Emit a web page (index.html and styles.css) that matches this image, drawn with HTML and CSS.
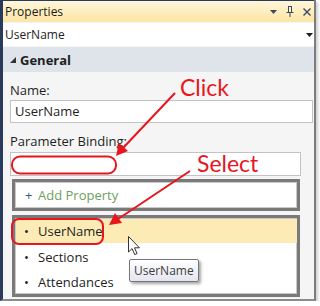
FILE: index.html
```html
<!DOCTYPE html>
<html lang="en">
<head>
    <meta charset="UTF-8">
    <title>Properties</title>
    <link rel="stylesheet" href="styles.css">
</head>
<body>

<div class="frame">
    <div class="titlebar">
        <span class="title">Properties</span>
        <span class="tools">
            <svg width="7" height="4" viewBox="0 0 7 4"><path d="M0 0h7L3.5 4z" fill="#3b4a64"/></svg>
            <svg width="8" height="11" viewBox="0 0 8 11"><path d="M2 .5h4M2.5 .5v6M5.5 .5v6M.5 6.5h7M4 6.5V11" stroke="#3b4a64" fill="none"/></svg>
            <svg width="8" height="8" viewBox="0 0 8 8"><path d="M.5 .5l7 7M7.5 .5l-7 7" stroke="#3b4a64" stroke-width="1.4"/></svg>
        </span>
    </div>

    <div class="combo">
        <span>UserName</span>
        <svg width="7" height="4" viewBox="0 0 7 4"><path d="M0 0h7L3.5 4z" fill="#1e1e1e"/></svg>
    </div>

    <div class="section-head">
        <svg width="6" height="6" viewBox="0 0 6 6"><path d="M6 0v6H0z" fill="#333"/></svg>
        <span>General</span>
    </div>

    <div class="content">
        <div class="label">Name:</div>
        <div class="textbox">UserName</div>

        <div class="label">Parameter Binding:</div>
        <div class="textbox short"></div>

        <div class="popup add-box">
            <span class="plus">+</span>
            <span class="add-text">Add Property</span>
        </div>

        <div class="popup list-box">
            <div class="item selected"><span class="dot">&bull;</span>UserName</div>
            <div class="item"><span class="dot">&bull;</span>Sections</div>
            <div class="item"><span class="dot">&bull;</span>Attendances</div>
        </div>
    </div>

    <div class="tooltip">UserName</div>

    <svg class="cursor" width="13" height="20" viewBox="0 0 13 20">
        <path d="M.5 .5v15.5l3.6-3.4 2.6 6 2.4-1-2.6-5.8h5z" fill="#fff" stroke="#333" stroke-linejoin="round"/>
    </svg>

    <span class="note note-click">Click</span>
    <span class="note note-select">Select</span>

    <svg class="marks" width="320" height="306" viewBox="0 0 320 306">
        <rect x="12" y="156.5" width="104" height="17" rx="8" fill="none" stroke="#e8151f" stroke-width="2"/>
        <rect x="12" y="219" width="91" height="25" rx="7" fill="none" stroke="#e8151f" stroke-width="2"/>
        <path d="M175 93L123 148" stroke="#e8151f" stroke-width="2"/>
        <path d="M116 156l3-13 9 8z" fill="#e8151f"/>
        <path d="M190 171L118 219" stroke="#e8151f" stroke-width="2"/>
        <path d="M109 225l6-12 7 10z" fill="#e8151f"/>
    </svg>
</div>

</body>
</html>
```

FILE: styles.css
```css
body {
    margin: 0;
    background-color: #ffffff;
    font-family: "Open Sans", "Liberation Sans", sans-serif;
}
.frame {
    position: relative;
    width: 311px;
    height: 299px;
    border-left: 3px solid #293a5c;
    border-right: 2px solid #7d7d7d;
    border-bottom: 2px solid #8c8c8c;
    background-color: #f5f5f5;
    overflow: hidden;
    box-shadow: 2px 2px 3px rgba(0, 0, 0, 0.2);
}
.titlebar {
    display: flex;
    align-items: center;
    justify-content: space-between;
    height: 22px;
    padding: 0 2px 0 2px;
    background: linear-gradient(#fff6da, #fde6a4);
    border-top: 1px solid #293a5c;
    box-sizing: border-box;
    font-size: 12px;
    color: #1b1b1b;
}
.tools {
    display: flex;
    align-items: center;
    gap: 9px;
    padding-right: 1px;
}
.combo {
    display: flex;
    align-items: center;
    justify-content: space-between;
    height: 23px;
    padding: 0 1px 0 2px;
    margin-top: 1px;
    background-color: #ffffff;
    box-sizing: border-box;
    font-size: 12px;
    color: #1e1e1e;
}
.section-head {
    display: flex;
    align-items: center;
    gap: 4px;
    height: 25px;
    margin-top: 1px;
    padding-left: 7px;
    background-color: #dfe3ea;
    font-size: 13px;
    font-weight: bold;
    color: #1e1e1e;
}
.content {
    padding: 9px 1px 0 7px;
}
.label {
    height: 18px;
    line-height: 18px;
    font-size: 13px;
    color: #1e1e1e;
}
.textbox {
    height: 23px;
    margin: 1px 0 9px 0;
    padding-left: 4px;
    line-height: 21px;
    background-color: #ffffff;
    border: 1px solid #c3c3c3;
    box-sizing: border-box;
    font-size: 13px;
    color: #1e1e1e;
}
.textbox.short {
    width: 291px;
    height: 24px;
    margin: 2px 0 0 0;
}
.popup {
    width: 288px;
    margin-left: 2px;
    background-color: #ffffff;
    border: 3px solid #7a7a7a;
    box-shadow: inset 0 0 0 1px #c9c9c9;
    box-sizing: border-box;
}
.add-box {
    display: flex;
    align-items: center;
    height: 32px;
    margin-top: 3px;
    padding-left: 10px;
    font-size: 13px;
}
.plus {
    width: 13px;
    color: #3a5a8a;
}
.add-text {
    color: #6c9f5e;
}
.list-box {
    height: 82px;
    margin-top: 4px;
    padding: 1px 0 0 1px;
}
.item {
    display: flex;
    align-items: center;
    height: 25px;
    padding-left: 8px;
    font-size: 13px;
    color: #1e1e1e;
}
.item.selected {
    background-color: #fdebb6;
    height: 24px;
    margin-bottom: 1px;
}
.dot {
    width: 14px;
}
.tooltip {
    position: absolute;
    left: 126px;
    top: 259px;
    padding: 2px 4px;
    background: linear-gradient(#ffffff, #e4e5f0);
    border: 1px solid #767676;
    border-radius: 2px;
    box-shadow: 2px 2px 3px rgba(0, 0, 0, 0.35);
    font-size: 12px;
    color: #3c3c3c;
}
.cursor {
    position: absolute;
    left: 125px;
    top: 236px;
}
.note {
    position: absolute;
    font-family: "Lato", "Liberation Sans", sans-serif;
    font-size: 23px;
    color: #e8151f;
    line-height: 1;
}
.note-click {
    left: 177px;
    top: 76px;
}
.note-select {
    left: 194px;
    top: 152px;
}
.marks {
    position: absolute;
    left: -3px;
    top: 0;
}
```
